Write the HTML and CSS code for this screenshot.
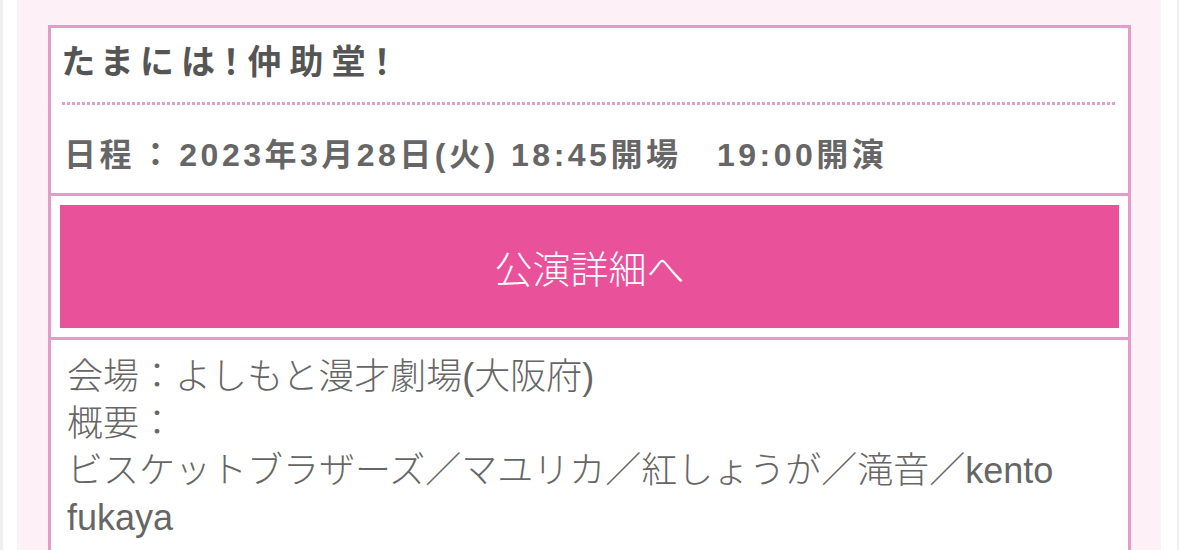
FILE: index.html
```html
<!DOCTYPE html>
<html lang="ja">
<head>
    <meta charset="UTF-8">
    <meta name="viewport" content="width=device-width, initial-scale=1.0">
    <title>公演情報</title>
    <link rel="stylesheet" href="styles.css">
</head>
<body>

    <div class="page">
        <div class="panel">

            <!-- Event card -->
            <div class="event-card">
                <div class="event-head">
                    <h2 class="event-title">たまには！仲助堂！</h2>
                    <p class="event-date">日程 ： 2023年3月28日(火) 18:45開場　19:00開演</p>
                </div>

                <div class="event-link">
                    <a class="detail-btn" href="#">公演詳細へ</a>
                </div>

                <div class="event-body">
                    <p>会場：よしもと漫才劇場(大阪府)</p>
                    <p>概要：</p>
                    <p>ビスケットブラザーズ／マユリカ／紅しょうが／滝音／kento fukaya</p>
                </div>
            </div>

        </div>
    </div>

</body>
</html>
```

FILE: styles.css
```css
/* Basic reset */
* {
    margin: 0;
    padding: 0;
    box-sizing: border-box;
}

body {
    font-family: 'Liberation Sans', 'Noto Sans CJK JP', sans-serif;
    background-color: #fff;
    color: #666;
}

.page {
    border-left: 3px solid #efefef;
    border-right: 2px solid #efefef;
    padding: 0 16px 0 14px;
    min-height: 700px;
}

.panel {
    background-color: #fdf0f7;
    padding: 25px 30px 40px 31px;
    min-height: 700px;
}

/* Event card */
.event-card {
    background-color: #fff;
    border: 3px solid #e39bc7;
}

.event-head {
    padding: 14px 12px 18px 11px;
}

.event-title {
    font-size: 34px;
    line-height: 40px;
    font-weight: bold;
    color: #555;
    letter-spacing: 8px;
    font-feature-settings: "palt";
    padding-bottom: 23px;
    background-image: linear-gradient(to right, #e49fc9 3px, transparent 3px);
    background-size: 5px 3px;
    background-repeat: repeat-x;
    background-position: left bottom;
}

.event-date {
    margin-top: 30px;
    font-size: 32px;
    line-height: 40px;
    font-weight: bold;
    color: #666;
    letter-spacing: 3.5px;
    font-feature-settings: "palt";
    padding-left: 2px;
}

.event-link {
    border-top: 3px solid #e39bc7;
    padding: 9px;
}

.detail-btn {
    display: flex;
    justify-content: center;
    align-items: center;
    height: 123px;
    background-color: #e9519b;
    color: #fff;
    font-size: 38px;
    font-weight: 300;
    text-decoration: none;
}

.event-body {
    border-top: 3px solid #e39bc7;
    padding: 13px 16px 30px 16px;
    font-size: 36px;
    line-height: 47px;
    font-weight: 300;
    color: #666;
}
```
